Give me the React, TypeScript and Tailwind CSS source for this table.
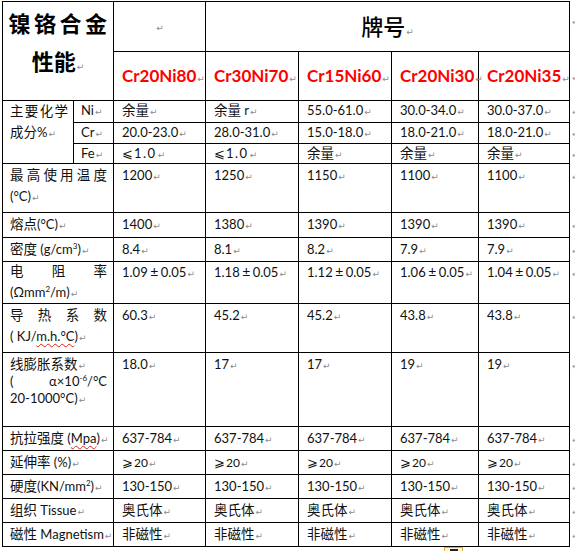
import React from "react";

// Word-style paragraph mark
const M = () => (
  <span className="ml-px font-['DejaVu_Sans',sans-serif] text-[9px] font-normal leading-none text-[#8c8c8c]">↵</span>
);

const CJK = /[\u3000-\u9fff\uff00-\uffef]/;

// split value into latin / cjk runs so each gets its own size
function Val({ v }: { v: string }) {
  const parts: React.ReactNode[] = [];
  let buf = "";
  let mode: "c" | "l" | null = null;
  const flush = () => {
    if (!buf) return;
    parts.push(
      mode === "c" ? (
        <span key={parts.length} className="text-[13.5px] leading-none">{buf}</span>
      ) : (
        <span key={parts.length} className="leading-none">{buf}</span>
      )
    );
    buf = "";
  };
  for (const ch of v) {
    if (ch === "±") {
      flush();
      parts.push(
        <span key={parts.length} className="inline-block w-[13px] text-center text-[14px] leading-none">
          ±
        </span>
      );
      mode = null;
      continue;
    }
    const m = CJK.test(ch) ? "c" : "l";
    if (m !== mode) flush();
    mode = m;
    buf += ch;
  }
  flush();
  return <>{parts}</>;
}

const names = ["Cr20Ni80", "Cr30Ni70", "Cr15Ni60", "Cr20Ni30", "Cr20Ni35"];

const td = "border border-black align-top";

function RowEnd({ pt = "pt-px" }: { pt?: string }) {
  return (
    <td className={`align-top pl-[2px] ${pt}`}>
      <span className="font-['DejaVu_Sans',sans-serif] text-[9px] leading-none text-[#9a9a9a]">↵</span>
    </td>
  );
}

function DataCells({ vals, cls = "pt-px" }: { vals: string[]; cls?: string }) {
  return (
    <>
      {vals.map((v, i) => (
        <td key={i} className={`${td} pl-[8px] ${cls}`}>
          <Val v={v} />
          <M />
        </td>
      ))}
    </>
  );
}

function Spread({ chars, h = "h-[21px]" }: { chars: string[]; h?: string }) {
  return (
    <div className={`flex ${h} items-center justify-between`}>
      {chars.map((c, i) => (
        <span key={i} className="text-[13.5px] leading-none">{c}</span>
      ))}
    </div>
  );
}

const C = ({ children }: { children: React.ReactNode }) => (
  <span className="text-[13.5px] leading-none">{children}</span>
);

const Sup = ({ children }: { children: React.ReactNode }) => (
  <span className="relative -top-[5px] text-[8px] leading-none">{children}</span>
);

const Wavy = ({ children }: { children: React.ReactNode }) => (
  <span className="leading-none underline decoration-[#e02020] decoration-wavy decoration-1 underline-offset-2">{children}</span>
);

export default function App() {
  const labelTd = `${td} pl-[7px] pr-[6px] pt-px`;
  const oneLine = `${td} pl-[7px] pt-px`;
  const small = "pt-0 leading-[19px]";
  return (
    <div className="relative min-h-[551px] w-[575px] overflow-hidden bg-white font-['Lato','Noto_Sans_CJK_SC',sans-serif] text-[13px] leading-[21px] text-[#111]">
      <table className="ml-[2px] mt-[1px] w-[573px] table-fixed border-collapse">
        <colgroup>
          <col className="w-[71px]" />
          <col className="w-[40px]" />
          <col className="w-[92px]" />
          <col className="w-[93px]" />
          <col className="w-[93px]" />
          <col className="w-[87px]" />
          <col className="w-[91px]" />
          <col className="w-[6px]" />
        </colgroup>
        <tbody>
          {/* header */}
          <tr className="h-[50px]">
            <td colSpan={2} rowSpan={2} className={`${td} pt-[3px] text-center leading-[38px] text-black`}>
              <div className="pl-[3px] text-[22px] font-bold tracking-[3.5px]">镍铬合金</div>
              <div className="text-[22px] font-bold">
                性能
                <M />
              </div>
            </td>
            <td className="border border-black text-center align-middle">
              <M />
            </td>
            <td colSpan={4} className="border border-black text-center align-middle text-[22px] font-medium leading-[30px] text-black">
              牌号
              <M />
            </td>
            <RowEnd pt="pt-[8px]" />
          </tr>
          <tr className="h-[49px]">
            {names.map((n) => (
              <td key={n} className={`${td} pl-[8px] pt-[12px] text-[17px] font-bold leading-[24px] text-[#ff0000]`}>
                {n}
                <M />
              </td>
            ))}
            <RowEnd pt="pt-[14px]" />
          </tr>

          {/* composition */}
          <tr className="h-[22px]">
            <td rowSpan={3} className={`${td} pl-[7px] pr-[5px] pt-0 leading-[21px]`}>
              <Spread chars={["主", "要", "化", "学"]} />
              <div>
                <C>成分</C>%<M />
              </div>
            </td>
            <td className={`${td} pl-[7px] ${small}`}>
              Ni
              <M />
            </td>
            <DataCells cls={small} vals={["余量", "余量 r", "55.0-61.0", "30.0-34.0", "30.0-37.0"]} />
            <RowEnd pt={small} />
          </tr>
          <tr className="h-[21px]">
            <td className={`${td} pl-[7px] ${small}`}>
              Cr
              <M />
            </td>
            <DataCells cls={small} vals={["20.0-23.0", "28.0-31.0", "15.0-18.0", "18.0-21.0", "18.0-21.0"]} />
            <RowEnd pt={small} />
          </tr>
          <tr className="h-[20px]">
            <td className={`${td} pl-[7px] pt-0 leading-[18px]`}>
              Fe
              <M />
            </td>
            {["⩽1.0", "⩽1.0", "余量", "余量", "余量"].map((v, i) => (
              <td key={i} className={`${td} pl-[8px] pt-0 leading-[18px]`}>
                {v.startsWith("⩽") ? (
                  <>
                    <span className="inline-block w-[12px] text-[13px] leading-none">⩽</span>
                    <span className="tracking-[1.5px] leading-none">1.0</span>
                  </>
                ) : (
                  <Val v={v} />
                )}
                <M />
              </td>
            ))}
            <RowEnd pt="pt-0 leading-[18px]" />
          </tr>

          <tr className="h-[49px]">
            <td colSpan={2} className={labelTd}>
              <Spread chars={["最", "高", "使", "用", "温", "度"]} />
              <div>
                (°C)
                <M />
              </div>
            </td>
            <DataCells vals={["1200", "1250", "1150", "1100", "1100"]} />
            <RowEnd />
          </tr>
          <tr className="h-[25px]">
            <td colSpan={2} className={labelTd}>
              <C>熔点</C>(°C)
              <M />
            </td>
            <DataCells vals={["1400", "1380", "1390", "1390", "1390"]} />
            <RowEnd />
          </tr>
          <tr className="h-[24px]">
            <td colSpan={2} className={oneLine}>
              <C>密度</C> (g/cm<Sup>3</Sup>)
              <M />
            </td>
            <DataCells vals={["8.4", "8.1", "8.2", "7.9", "7.9"]} />
            <RowEnd />
          </tr>
          <tr className="h-[42px]">
            <td colSpan={2} className={`${td} pl-[7px] pr-[6px] pt-0 leading-[20px]`}>
              <Spread h="h-[20px]" chars={["电", "阻", "率"]} />
              <div>
                (Ωmm<Sup>2</Sup>/m)
                <M />
              </div>
            </td>
            <DataCells cls="pt-0" vals={["1.09±0.05", "1.18±0.05", "1.12±0.05", "1.06±0.05", "1.04±0.05"]} />
            <RowEnd pt="pt-0" />
          </tr>
          <tr className="h-[49px]">
            <td colSpan={2} className={labelTd}>
              <Spread chars={["导", "热", "系", "数"]} />
              <div>
                ( KJ/<Wavy>m.h.°C</Wavy>)
                <M />
              </div>
            </td>
            <DataCells vals={["60.3", "45.2", "45.2", "43.8", "43.8"]} />
            <RowEnd />
          </tr>
          <tr className="h-[74px]">
            <td colSpan={2} className={labelTd}>
              <div>
                <C>线膨胀系数</C>
                <M />
              </div>
              <div className="flex justify-between">
                <span className="leading-none">(</span>
                <span className="leading-none">
                  α×10<Sup>-6</Sup>/°C
                </span>
              </div>
              <div>
                20-1000°C)
                <M />
              </div>
            </td>
            <DataCells vals={["18.0", "17", "17", "19", "19"]} />
            <RowEnd />
          </tr>
          <tr className="h-[24px]">
            <td colSpan={2} className={oneLine}>
              <C>抗拉强度</C> (<Wavy>Mpa</Wavy>)
              <M />
            </td>
            <DataCells vals={["637-784", "637-784", "637-784", "637-784", "637-784"]} />
            <RowEnd />
          </tr>
          <tr className="h-[24px]">
            <td colSpan={2} className={oneLine}>
              <C>延伸率</C> (%)
              <M />
            </td>
            {[0, 1, 2, 3, 4].map((i) => (
              <td key={i} className={`${td} pl-[8px] pt-px`}>
                <span className="inline-block w-[12px] text-[13px] leading-none">⩾</span>
                <span className="text-[12px] leading-none">20</span>
                <M />
              </td>
            ))}
            <RowEnd />
          </tr>
          <tr className="h-[24px]">
            <td colSpan={2} className={oneLine}>
              <C>硬度</C>(KN/mm<Sup>2</Sup>)
              <M />
            </td>
            <DataCells vals={["130-150", "130-150", "130-150", "130-150", "130-150"]} />
            <RowEnd />
          </tr>
          <tr className="h-[24px]">
            <td colSpan={2} className={oneLine}>
              <C>组织</C> Tissue
              <M />
            </td>
            <DataCells vals={["奥氏体", "奥氏体", "奥氏体", "奥氏体", "奥氏体"]} />
            <RowEnd />
          </tr>
          <tr className="h-[24px]">
            <td colSpan={2} className={`${oneLine} whitespace-nowrap`}>
              <C>磁性</C> Magnetism
              <M />
            </td>
            <DataCells vals={["非磁性", "非磁性", "非磁性", "非磁性", "非磁性"]} />
            <RowEnd />
          </tr>
        </tbody>
      </table>

      {/* paste-options tag peeking under the table */}
      <div className="absolute left-[444px] top-[547px] flex h-[8px] w-[19px] justify-center border border-[#f0a838] bg-[#fff6dc]">
        <div className="mt-[1px] h-[4px] w-[8px] bg-[#222]" />
      </div>
    </div>
  );
}
